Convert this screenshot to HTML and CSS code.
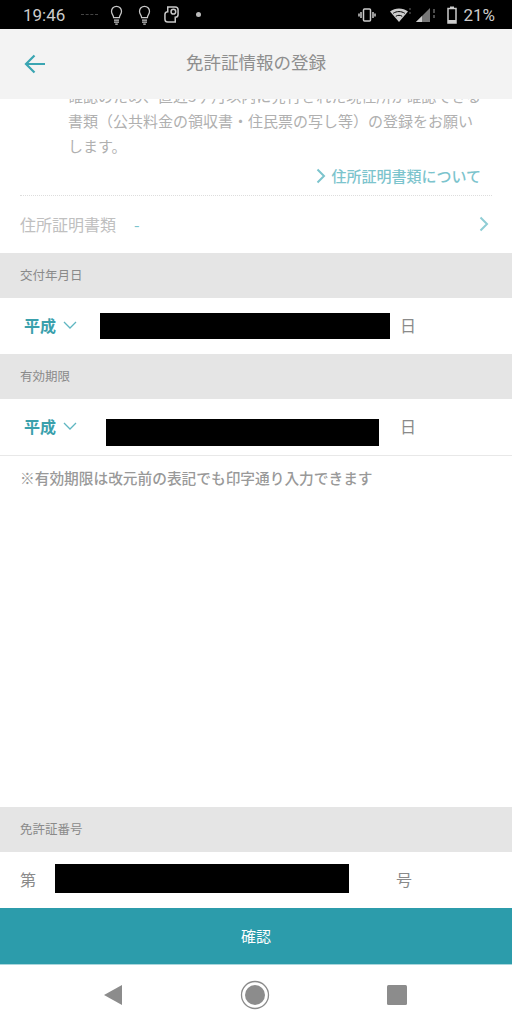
FILE: index.html
```html
<!DOCTYPE html>
<html lang="ja">
<head>
  <meta charset="UTF-8">
  <title>免許証情報の登録</title>
  <link rel="stylesheet" href="styles.css">
</head>
<body>
  <div class="screen">
    <!-- status bar -->
    <div class="status">
      <span class="clock">19:46</span>
      <span class="dash"></span>
      <svg class="ico bulb1" width="15" height="20" viewBox="0 0 18 24" fill="none" stroke="#c8c8c8" stroke-width="1.500"><path d="M5.500 15c0-3-2.500-3.500-2.500-7.500a6 6 0 0 1 12 0C15 11.500 12.500 12 12.500 15zM6 18h6M6 20.500h6M7.500 23h3"/></svg>
      <svg class="ico bulb2" width="15" height="20" viewBox="0 0 18 24" fill="none" stroke="#c8c8c8" stroke-width="1.500"><path d="M5.500 15c0-3-2.500-3.500-2.500-7.500a6 6 0 0 1 12 0C15 11.500 12.500 12 12.500 15zM6 18h6M6 20.500h6M7.500 23h3"/></svg>
      <svg class="ico app" width="15" height="19" viewBox="0 0 16 20" fill="none" stroke="#c8c8c8" stroke-width="1.600"><path d="M4 4V2h8a3 3 0 0 1 3 3v5a3 3 0 0 1-3 3v5H4a3 3 0 0 1-3-3v-5a3 3 0 0 1 3-3V4z"/><circle cx="10" cy="7" r="2.500"/></svg>
      <span class="dot"></span>
      <span class="status-right">
        <svg width="18" height="14" viewBox="0 0 18 14" fill="none" stroke="#ccc" stroke-width="1.500"><rect x="5.500" y="1" width="7" height="12" rx="1"/><path d="M3 4v6M1 5.500v3M15 4v6M17 5.500v3"/></svg>
        <svg class="wifi" width="22" height="16" viewBox="0 0 22 16"><path d="M1 4.500C6 .5 14 .5 19 4.500L10 15z" fill="#ccc"/><path d="M4.200 6.300c3.500-2.300 8-2.300 11.600 0" stroke="#000" fill="none"/><path d="M6.800 9.300c2-1.300 4.400-1.300 6.400 0" stroke="#000" fill="none"/><path d="M21 1v2M21 5v2" stroke="#666"/></svg>
        <svg class="signal" width="20" height="16" viewBox="0 0 20 16"><path d="M0 15L14 1v14z" fill="#777"/><path d="M0 15l6-6v6z" fill="#ccc"/><path d="M18 2v4M18 8v3" stroke="#666" stroke-width="1.500"/></svg>
        <svg class="batt" width="10" height="18" viewBox="0 0 10 18" fill="none"><path d="M3 2V.500h4V2" fill="#ccc"/><rect x="1" y="2.500" width="8" height="14.500" stroke="#ccc" stroke-width="1.500"/><rect x="1" y="14" width="8" height="3" fill="#ccc"/></svg>
        <span class="pct">21%</span>
      </span>
    </div>

    <div class="head">
      <svg class="back" width="22" height="20" viewBox="0 0 22 20" fill="none" stroke="#3aa5b2" stroke-width="2.200"><path d="M21 10H2M10.500 1.500L2 10l8.500 8.500"/></svg>
      <span class="head-title">免許証情報の登録</span>
    </div>

    <div class="content">
      <div class="notice">
        <p class="notice-text">確認のため、直近3ヶ月以内に発行された現住所が確認できる書類（公共料金の領収書・住民票の写し等）の登録をお願いします。</p>
        <div class="notice-link">
          <svg width="10" height="16" viewBox="0 0 10 16" fill="none" stroke="#7cc4cd" stroke-width="2"><path d="M1.500 1.500L8 8l-6.500 6.500"/></svg>
          <span>住所証明書類について</span>
        </div>
      </div>
      <div class="doc-row">
        <span class="doc-label">住所証明書類</span>
        <span class="doc-value">-</span>
        <svg class="doc-arrow" width="10" height="16" viewBox="0 0 10 16" fill="none" stroke="#8fcdd5" stroke-width="2"><path d="M1.500 1.500L8 8l-6.500 6.500"/></svg>
      </div>

      <div class="band">交付年月日</div>
      <div class="row">
        <span class="era">平成</span>
        <svg class="chev" width="14" height="8" viewBox="0 0 14 8" fill="none" stroke="#5fb6c1" stroke-width="1.300"><path d="M1 1l6 6 6-6"/></svg>
        <span class="mask mask-issue"></span>
        <span class="unit">日</span>
      </div>

      <div class="band">有効期限</div>
      <div class="row row-line">
        <span class="era">平成</span>
        <svg class="chev" width="14" height="8" viewBox="0 0 14 8" fill="none" stroke="#5fb6c1" stroke-width="1.300"><path d="M1 1l6 6 6-6"/></svg>
        <span class="mask mask-expire"></span>
        <span class="unit">日</span>
      </div>
      <p class="hint">※有効期限は改元前の表記でも印字通り入力できます</p>

      <div class="band band-number">免許証番号</div>
      <div class="row row-number">
        <span class="unit">第</span>
        <span class="mask mask-number"></span>
        <span class="unit unit-go">号</span>
      </div>
    </div>

    <div class="btn">確認</div>

    <div class="nav">
      <svg width="20" height="20" viewBox="0 0 20 20"><path d="M19 0v20L1 10z" fill="#8c8c8c"/></svg>
      <svg width="30" height="30" viewBox="0 0 30 30"><circle cx="15" cy="15" r="13.500" fill="none" stroke="#8c8c8c" stroke-width="1.300"/><circle cx="15" cy="15" r="10" fill="#8c8c8c"/></svg>
      <svg width="20" height="20" viewBox="0 0 20 20"><rect width="20" height="20" rx="1.500" fill="#8c8c8c"/></svg>
    </div>
  </div>
</body>
</html>
```

FILE: styles.css
```css
*{
  margin: 0;
  padding: 0;
  box-sizing: border-box;
}
html, body{
  height: 100%;
}
body{
  background: #fff;
  font-family: "Noto Sans CJK JP", "Noto Sans", sans-serif;
  color: #999;
}
.screen{
  width: 512px;
  height: 1024px;
  display: flex;
  flex-direction: column;
  overflow: hidden;
}
.status{
  height: 29px;
  flex: none;
  background: #000;
  color: #ccc;
  display: flex;
  align-items: center;
  padding-left: 23px;
}
.clock{
  font-family: Roboto, sans-serif;
  font-size: 17px;
  width: 58px;
}
.dash{
  width: 17px;
  border-top: 1px dashed #444;
}
.ico{
  flex: none;
}
.bulb1{
  margin-left: 11px;
}
.bulb2{
  margin-left: 13px;
}
.app{
  margin-left: 12px;
}
.dot{
  width: 5px;
  height: 5px;
  border-radius: 50%;
  background: #bbb;
  margin-left: 17px;
}
.status-right{
  margin-left: auto;
  display: flex;
  align-items: center;
  padding-right: 17px;
}
.wifi{
  margin-left: 13px;
}
.signal{
  margin-left: 5px;
}
.batt{
  margin-left: 11px;
}
.pct{
  font-family: Roboto, sans-serif;
  font-size: 17px;
  margin-left: 6px;
}
.head{
  height: 70px;
  flex: none;
  background: #f3f3f3;
  display: flex;
  align-items: center;
  justify-content: center;
  position: relative;
  z-index: 1;
}
.back{
  position: absolute;
  left: 24px;
  top: 25px;
}
.head-title{
  font-size: 17.500px;
  color: #8e8e8e;
  margin-top: -6px;
}
.content{
  flex: 1;
  display: flex;
  flex-direction: column;
  min-height: 0;
}
.notice{
  margin: 0 20px;
  height: 97px;
  border-bottom: 1px dotted #ddd;
  padding: 0 0 0 48px;
}
.notice-text{
  margin-top: -16px;
  width: 416px;
  font-size: 15px;
  line-height: 25px;
  color: #b0b0b0;
}
.notice-link{
  display: flex;
  align-items: center;
  justify-content: flex-end;
  gap: 5px;
  margin-top: 8px;
  font-size: 15px;
  font-weight: 500;
  color: #7cc4cd;
  padding-right: 11px;
  line-height: 20px;
}
.doc-row{
  height: 57px;
  flex: none;
  display: flex;
  align-items: center;
  padding: 0 23px 2px 20px;
  font-size: 16px;
  color: #c0c0c0;
}
.doc-value{
  margin-left: 18px;
  color: #7cc4cd;
}
.doc-arrow{
  margin-left: auto;
}
.band{
  height: 45px;
  flex: none;
  background: #e5e5e5;
  display: flex;
  align-items: center;
  padding: 0 0 2px 20px;
  font-size: 12.500px;
  color: #8a8a8a;
}
.row{
  height: 56px;
  flex: none;
  display: flex;
  align-items: center;
  padding: 0 0 2px 24px;
  background: #fff;
}
.row-line{
  height: 57px;
  border-bottom: 1px solid #e8e8e8;
}
.era{
  font-size: 16px;
  font-weight: 700;
  color: #3aa0ac;
}
.chev{
  margin-left: 7px;
}
.unit{
  font-size: 16px;
  color: #8a8a8a;
}
.mask{
  background: #000;
  flex: none;
}
.mask-issue{
  width: 290px;
  height: 26px;
  margin: 2px 10px 0 23px;
}
.mask-expire{
  width: 273px;
  height: 27px;
  margin: 12px 21px 0 29px;
}
.hint{
  margin: 12px 0 0 20px;
  font-size: 14.700px;
  font-weight: 500;
  line-height: 20px;
  color: #999;
}
.band-number{
  margin-top: auto;
}
.row-number{
  padding-left: 20px;
}
.mask-number{
  width: 294px;
  height: 29px;
  margin: 0 0 2px 19px;
}
.unit-go{
  margin-left: 47px;
}
.btn{
  height: 57px;
  flex: none;
  background: #2c9cab;
  border-bottom: 1px solid #a9d6dc;
  color: #fff;
  font-size: 15px;
  padding-bottom: 1px;
  display: flex;
  align-items: center;
  justify-content: center;
}
.nav{
  height: 59px;
  flex: none;
  background: #fff;
  display: flex;
  align-items: center;
  justify-content: space-between;
  padding: 1px 105px 0 103px;
}
```
